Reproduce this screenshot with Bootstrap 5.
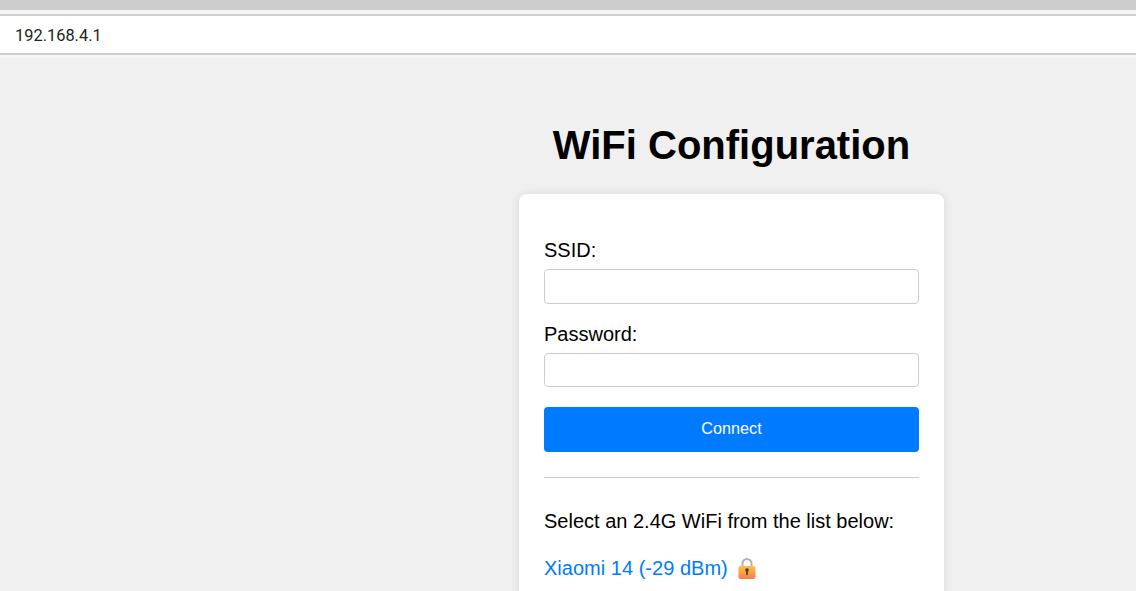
<!DOCTYPE html>
<html lang="en">
<head>
  <meta charset="UTF-8" />
  <meta name="viewport" content="width=device-width, initial-scale=1.0"/>
  <title>WiFi Configuration</title>
  <link href="https://cdn.jsdelivr.net/npm/bootstrap@5.3.0/dist/css/bootstrap.min.css" rel="stylesheet">
  <style>
    html, body {
      height: 591px;
      overflow: hidden;
    }
    body {
      background: #f0f0f0;
      font-family: "Liberation Sans", Arial, sans-serif;
      color: #000;
    }
    .top-strip {
      height: 10px;
      background: #cdcdcd;
    }
    .addr-wrap {
      background: #f6f6f6;
      padding: 4px 0 3px;
    }
    .addr-bar {
      height: 41px;
      background: #fff;
      border-top: 2px solid #cfcfcf;
      border-bottom: 2px solid #cfcfcf;
      padding: 3px 0 0 15px;
      font-family: Roboto, "Liberation Sans", sans-serif;
      font-size: 16.4px;
      color: #222;
    }
    .page-column {
      width: 425px;
      margin-left: 519px;
    }
    .page-title {
      font-size: 40px;
      font-weight: 700;
      line-height: 46px;
      margin: 64px 0 26px;
    }
    .config-card {
      background: #fff;
      border-radius: 8px;
      padding: 45px 25px 25px;
      box-shadow: 0 0 10px rgba(0, 0, 0, .1);
    }
    .field-label {
      display: block;
      font-size: 20px;
      line-height: 23px;
      margin-bottom: 7px;
    }
    .field-input {
      height: 34.5px;
      border: 1px solid #ccc;
      border-radius: 4px;
      margin-bottom: 19px;
    }
    .field-input:focus {
      border-color: #ccc;
      box-shadow: none;
    }
    .connect-btn {
      height: 45px;
      background: #007bff;
      border: 0;
      border-radius: 4px;
      color: #fff;
      font-size: 16.2px;
      margin-top: 1px;
      padding: 0 0 3px;
    }
    .connect-btn:hover {
      background: #0069d9;
      color: #fff;
    }
    .card-rule {
      margin: 25px 0 32px;
      border-top: 1px solid #ccc;
      opacity: 1;
    }
    .list-intro {
      font-size: 20px;
      line-height: 23px;
      margin-bottom: 24px;
    }
    .net-link {
      font-size: 20px;
      line-height: 23px;
      color: #007bff;
      text-decoration: none;
      letter-spacing: .02px;
    }
    .net-row {
      gap: 10px;
    }
    .lock-icon {
      width: 18px;
      height: 21px;
    }
  </style>
</head>
<body>

<div class="top-strip"></div>
<div class="addr-wrap">
  <div class="addr-bar d-flex align-items-center">192.168.4.1</div>
</div>

<div class="page-column">
  <h1 class="page-title text-center">WiFi Configuration</h1>
  <div class="config-card">
    <form>
      <label for="ssid" class="field-label">SSID:</label>
      <input type="text" id="ssid" class="form-control field-input" />
      <label for="password" class="field-label">Password:</label>
      <input type="password" id="password" class="form-control field-input" />
      <button type="button" class="btn connect-btn w-100">Connect</button>
    </form>
    <hr class="card-rule">
    <p class="list-intro">Select an 2.4G WiFi from the list below:</p>
    <div class="net-row d-flex align-items-center">
      <a href="#" class="net-link">Xiaomi 14 (-29 dBm)</a>
      <svg class="lock-icon" viewBox="0 0 18 21" aria-hidden="true">
        <defs>
          <linearGradient id="lockBody" x1="0" y1="0" x2="0" y2="1">
            <stop offset="0" stop-color="#fdc040"/>
            <stop offset="1" stop-color="#f57f4f"/>
          </linearGradient>
        </defs>
        <path d="M4.5 9V5.5a4.5 4.5 0 0 1 9 0V9" fill="none" stroke="#b5b0b8" stroke-width="2"/>
        <rect x="0.5" y="8" width="17" height="13" rx="2" fill="url(#lockBody)"/>
        <circle cx="9" cy="12" r="1.7" fill="#43363a"/>
        <rect x="8.2" y="12.5" width="1.6" height="4.5" fill="#43363a"/>
      </svg>
    </div>
  </div>
</div>

</body>
</html>
